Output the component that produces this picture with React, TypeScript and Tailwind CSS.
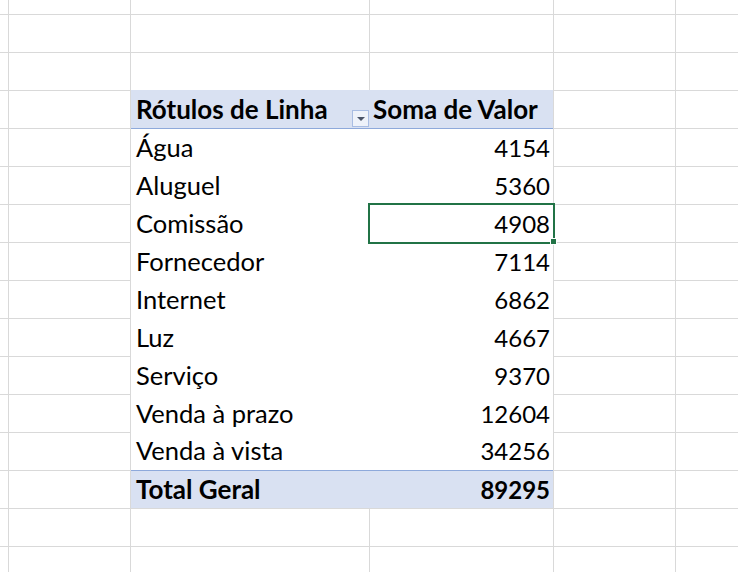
import React from "react";

const rows: [string, string][] = [
  ["Água", "4154"],
  ["Aluguel", "5360"],
  ["Comissão", "4908"],
  ["Fornecedor", "7114"],
  ["Internet", "6862"],
  ["Luz", "4667"],
  ["Serviço", "9370"],
  ["Venda à prazo", "12604"],
  ["Venda à vista", "34256"],
];

export default function App() {
  const cells: React.ReactNode[] = [];
  for (let r = 0; r < 16; r++) {
    for (let c = 0; c < 6; c++) {
      if (r >= 3 && r <= 13 && (c === 2 || c === 3)) continue;
      cells.push(
        <div
          key={`${r}-${c}`}
          className={c === 5 ? "border-b border-[#d9d9d9]" : "border-r border-b border-[#d9d9d9]"}
        />
      );
    }
  }
  return (
    <div
      className="w-[738px] h-[572px] overflow-hidden bg-white text-black"
      style={{ fontFamily: "Lato, 'Open Sans', sans-serif" }}
    >
      <div className="grid grid-cols-[9px_122px_239px_184px_122px_1fr] grid-rows-[15px_repeat(15,38px)]">
        <div className="col-start-3 col-span-2 row-start-4 row-span-11 -mt-px relative bg-white border-r border-b border-[#d9d9d9] flex flex-col leading-none">
          <div className="h-[39px] shrink-0 flex bg-[#d9e1f2] border-b border-[#8ea9db] font-bold text-[26px]">
            <div className="w-[239px] flex items-end pl-[5px] pb-[6px]">Rótulos de Linha</div>
            <div className="flex-1 flex items-end pl-[3px] pb-[6px]">Soma de Valor</div>
          </div>
          {rows.map(([k, v], i) => (
            <div key={k} className={`${i === 8 ? "h-[37px]" : "h-[38px]"} shrink-0 flex`}>
              <div className="w-[239px] flex items-end pl-[5px] pb-[7px] text-[25.5px]">{k}</div>
              <div className="flex-1 flex items-end justify-end pr-[3px] pb-[7px] text-[24px]">{v}</div>
            </div>
          ))}
          <div className="h-[38px] shrink-0 flex bg-[#d9e1f2] border-t border-[#8ea9db] font-bold">
            <div className="w-[239px] flex items-end pl-[5px] pb-[6px] text-[26px]">Total Geral</div>
            <div className="flex-1 flex items-end justify-end pr-[3px] pb-[6px] text-[24px]">89295</div>
          </div>

          <div className="absolute left-[221px] top-[20px] w-[17px] h-[17px] border border-[#a9bde3] bg-[#eef2fa] flex items-center justify-center">
            <div className="w-0 h-0 border-l-[4px] border-r-[4px] border-t-[4px] border-l-transparent border-r-transparent border-t-[#4a5468] mt-[1px]" />
          </div>

          <div className="absolute left-[237px] top-[113px] w-[187px] h-[41px] border-2 border-[#217346]" />
          <div className="absolute left-[419px] top-[148px] w-[7px] h-[7px] bg-white flex items-center justify-center">
            <div className="w-[5px] h-[5px] bg-[#217346]" />
          </div>
        </div>
        {cells}
      </div>
    </div>
  );
}
